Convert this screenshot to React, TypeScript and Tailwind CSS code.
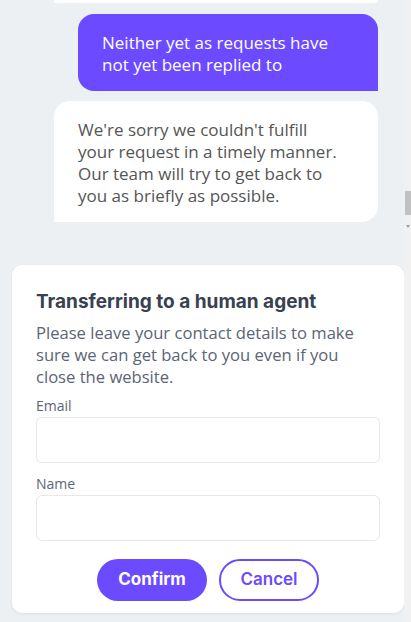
import React from "react";

const body = { fontFamily: '"Open Sans", "Noto Sans", sans-serif' };
const head = { fontFamily: 'Inter, "Open Sans", sans-serif' };

export default function App() {
  return (
    <div className="w-[411px] h-[622px] bg-[#edf0f3] overflow-hidden flex" style={body}>
      <div className="w-[404px] flex flex-col">
        {/* tail of the previous bot message */}
        <div className="ml-[54px] w-[324px] h-[3px] bg-white rounded-br-[14px]" />

        {/* user message */}
        <div className="mt-[11px] ml-[78px] w-[300px] bg-[#6c4aff] rounded-t-[16px] rounded-bl-[16px] px-6 pt-[18px] pb-[15px] text-white text-[17px] leading-[22px]">
          Neither yet as requests have not yet been replied to
        </div>

        {/* bot message */}
        <div className="mt-[10px] ml-[54px] w-[324px] bg-white rounded-t-[16px] rounded-br-[16px] pl-6 pr-[34px] pt-[18px] pb-[15px] text-[#555] text-[17px] leading-[22px]">
          We're sorry we couldn't fulfill your request in a timely manner. Our team will try to get back to you as briefly as possible.
        </div>

        {/* transfer form */}
        <div className="mt-[43px] ml-[12px] w-[392px] bg-white rounded-[10px] shadow-[0_1px_3px_rgba(0,0,0,0.08)] px-6 pt-[25px] pb-[12px]">
          <div className="text-[19px] leading-[24px] font-bold text-[#37414f]" style={head}>
            Transferring to a human agent
          </div>
          <p className="mt-[8px] text-[16.6px] leading-[22px] text-[#5b6574]">
            Please leave your contact details to make sure we can get back to you even if you close the website.
          </p>
          <label className="block mt-[9px] text-[14px] leading-[18px] text-[#5b6574]">Email</label>
          <div className="mt-[2px] h-[46px] rounded-[6px] border border-[#e6e8eb]" />
          <label className="block mt-[12px] text-[14px] leading-[18px] text-[#5b6574]">Name</label>
          <div className="mt-[2px] h-[46px] rounded-[6px] border border-[#e6e8eb]" />
          <div className="mt-[18px] flex justify-center gap-3">
            <button
              className="w-[110px] h-[42px] rounded-full bg-[#6c4aff] text-white text-[17px] font-bold"
              style={head}
            >
              Confirm
            </button>
            <button
              className="w-[100px] h-[42px] rounded-full border-2 border-[#6c4aff] bg-white text-[#6c4aff] text-[17px] font-semibold"
              style={head}
            >
              Cancel
            </button>
          </div>
        </div>
      </div>

      {/* scrollbar */}
      <div className="w-[7px] bg-[#f1f1f1] flex flex-col items-end">
        <div className="mt-[191px] w-[6px] h-[24px] bg-[#c1c1c1]" />
        <div className="mt-[10px] mr-[1px] w-0 h-0 border-l-[2px] border-r-[2px] border-t-[3px] border-l-transparent border-r-transparent border-t-[#a0a0a0]" />
      </div>
    </div>
  );
}
